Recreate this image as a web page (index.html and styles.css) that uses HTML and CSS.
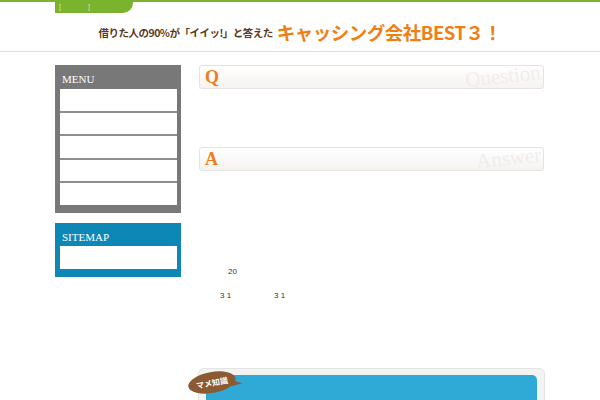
FILE: index.html
```html
<!DOCTYPE html>
<html lang="ja">
<head>
<meta charset="utf-8">
<title>キャッシング会社BEST3</title>
<link rel="stylesheet" href="styles.css">
</head>
<body>
<header class="site-header">
  <div class="topline">
    <div class="wrap"><div class="tab"><span>[</span><span>]</span></div></div>
  </div>
  <h1 class="title"><span class="t-brown">借りた人の90%が「イイッ!」と答えた</span><span class="t-orange">キャッシング会社BEST３！</span></h1>
</header>
<div class="wrap layout">
  <aside class="side">
    <nav class="menu">
      <h2 class="box-title">MENU</h2>
      <ul class="menu-list">
        <li></li>
        <li></li>
        <li></li>
        <li></li>
        <li></li>
      </ul>
    </nav>
    <div class="sitemap">
      <h2 class="box-title">SITEMAP</h2>
      <div class="sm-body"></div>
    </div>
  </aside>
  <main class="main">
    <div class="qa-bar"><span class="qa-letter">Q</span><span class="qa-mark">Question</span></div>
    <div class="qa-body"></div>
    <div class="qa-bar"><span class="qa-letter">A</span><span class="qa-mark">Answer</span></div>
    <div class="answer-text">
      <p class="l1">20</p>
      <p class="l2"><span class="num">3 1</span><span class="num">3 1</span></p>
    </div>
    <section class="trivia">
      <span class="badge">マメ知識</span>
      <div class="trivia-inner"></div>
    </section>
  </main>
</div>
</body>
</html>
```

FILE: styles.css
```css
html, body {
  margin: 0;
  padding: 0;
  background: #fff;
  font-family: "Noto Sans CJK JP", "Noto Sans", sans-serif;
  overflow: hidden;
}

.wrap {
  width: 490px;
  margin: 0 auto;
}

/* header */
.topline {
  border-top: 2px solid #7ab42e;
}
.tab {
  width: 78px;
  height: 11px;
  box-sizing: border-box;
  background: #7ab42e;
  border-bottom-right-radius: 10px;
  display: flex;
  gap: 27px;
  padding-left: 4px;
  font-family: "Liberation Sans", sans-serif;
  font-size: 7px;
  line-height: 10px;
  color: #d4ecb0;
}
.title {
  margin: 0;
  height: 38px;
  border-bottom: 1px solid #dedede;
  display: flex;
  justify-content: center;
  align-items: center;
  gap: 4px;
  font-weight: bold;
  white-space: nowrap;
}
.t-brown {
  font-size: 10.5px;
  color: #5b3a1c;
  letter-spacing: -0.5px;
}
.t-orange {
  font-size: 18.5px;
  color: #f07e12;
  letter-spacing: -0.5px;
}

/* layout */
.layout {
  display: flex;
  gap: 18px;
  margin-top: 13px;
  align-items: flex-start;
}
.side {
  width: 126px;
  flex: none;
}
.main {
  width: 346px;
  flex: none;
}

/* sidebar boxes */
.menu {
  background: #787878;
  padding: 0 4px 8px 5px;
}
.box-title {
  margin: 0;
  font-family: "Liberation Serif", serif;
  font-weight: normal;
  font-size: 11px;
  line-height: 13px;
  height: 24px;
  box-sizing: border-box;
  padding: 8px 0 0 2px;
  color: #fff;
}
.menu-list {
  list-style: none;
  margin: 0;
  padding: 0;
}
.menu-list li {
  height: 21.5px;
  background: #fff;
}
.menu-list li + li {
  border-top: 2px solid #8e8e8e;
}
.sitemap {
  margin-top: 10px;
  background: #0d87b6;
  padding: 0 4px 8px 5px;
}
.sitemap .box-title {
  height: 23px;
}
.sm-body {
  height: 23px;
  background: #fff;
}

/* Q & A bars */
.qa-bar {
  height: 24px;
  margin-right: 1px;
  box-sizing: border-box;
  border: 1px solid #e6e3e0;
  border-radius: 3px;
  background: linear-gradient(#ffffff, #f6f3f0);
  display: flex;
  align-items: center;
  justify-content: space-between;
  padding-left: 5px;
  overflow: hidden;
}
.qa-letter {
  font-family: "Liberation Serif", serif;
  font-weight: bold;
  font-size: 18px;
  line-height: 1;
  color: #ee7d1b;
}
.qa-mark {
  font-family: "Liberation Serif", serif;
  font-size: 21px;
  line-height: 1;
  color: #f0edeb;
  transform: rotate(-6deg);
  margin-right: 2px;
  margin-top: -1px;
}
.qa-body {
  height: 58px;
}

/* answer text */
.answer-text p {
  margin: 0;
  font-family: "Liberation Sans", sans-serif;
  font-size: 8px;
  line-height: 10px;
  color: #333;
}
.answer-text .l1 {
  margin-top: 96px;
  padding-left: 29px;
}
.answer-text .l2 {
  margin-top: 14px;
  padding-left: 21px;
  display: flex;
}
.answer-text .num {
  width: 54px;
}

/* trivia card */
.trivia {
  position: relative;
  margin-top: 67px;
  margin-left: -1px;
  background: #f3f3f1;
  border: 1px solid #e4e4e2;
  border-radius: 6px;
  padding: 6px 7px 0 7px;
}
.trivia-inner {
  height: 60px;
  background: #2fa9d6;
  border-radius: 5px 5px 0 0;
}
.badge {
  position: absolute;
  left: -11px;
  top: 3px;
  width: 48px;
  height: 21px;
  background: #8b5a33;
  border-radius: 50%;
  transform: rotate(-10deg);
  color: #fff;
  font-size: 8px;
  font-weight: bold;
  line-height: 21px;
  text-align: center;
  z-index: 2;
}
.badge::after {
  content: "";
  position: absolute;
  right: -5px;
  bottom: 1px;
  width: 0;
  height: 0;
  border-left: 10px solid #8b5a33;
  border-bottom: 6px solid transparent;
  transform: rotate(25deg);
}
```
